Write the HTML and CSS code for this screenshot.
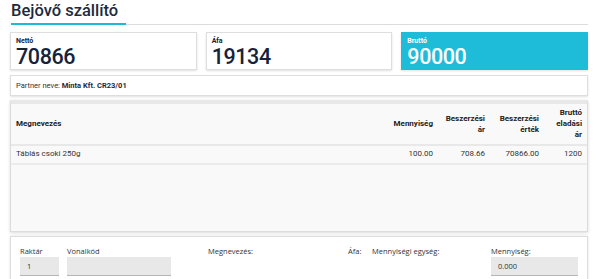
FILE: index.html
```html
<!DOCTYPE html>
<html lang="hu">
<head>
  <meta charset="UTF-8" />
  <title>Bejövő szállító</title>
  <link rel="stylesheet" href="styles.css">
</head>
<body>
  <div class="page">
    <h1 class="title">Bejövő szállító</h1>
    <div class="title-line"><span class="title-accent"></span></div>

    <div class="totals">
      <div class="card">
        <div class="card-label">Nettó</div>
        <div class="card-value">70866</div>
      </div>
      <div class="card">
        <div class="card-label">Áfa</div>
        <div class="card-value">19134</div>
      </div>
      <div class="card card-accent">
        <div class="card-label">Bruttó</div>
        <div class="card-value">90000</div>
      </div>
    </div>

    <div class="partner">Partner neve: <b>Minta Kft. CR23/01</b></div>

    <div class="items">
      <table class="item-table">
        <thead>
          <tr>
            <th>Megnevezés</th>
            <th class="num col-qty">Mennyiség</th>
            <th class="num col-price">Beszerzési ár</th>
            <th class="num col-value">Beszerzési érték</th>
            <th class="num col-gross">Bruttó eladási ár</th>
          </tr>
        </thead>
        <tbody>
          <tr>
            <td>Táblás csoki 250g</td>
            <td class="num">100.00</td>
            <td class="num">708.66</td>
            <td class="num">70866.00</td>
            <td class="num">1200</td>
          </tr>
        </tbody>
      </table>
    </div>

    <div class="entry">
      <div class="field">
        <label>Raktár</label>
        <div class="input">1</div>
      </div>
      <div class="field">
        <label>Vonalkód</label>
        <div class="input"></div>
      </div>
      <div class="field field-name">
        <label>Megnevezés:</label>
      </div>
      <div class="field">
        <label>Áfa:</label>
      </div>
      <div class="field">
        <label>Mennyiségi egység:</label>
      </div>
      <div class="field">
        <label>Mennyiség:</label>
        <div class="input">0.000</div>
      </div>
    </div>
  </div>
</body>
</html>
```

FILE: styles.css
```css
body { margin: 0; background: #fff; font-family: Roboto, "Liberation Sans", sans-serif; color: #222; }
.page { padding: 0 11px 0 10px; }

.title { margin: 0; padding: 0 0 0 1px; font-size: 16.5px; line-height: 21px; font-weight: 500; color: #1d2a3d; }
.title-line { margin: 3px 0 0 1px; height: 1px; border-top: 1px solid #dcdcdc; position: relative; }
.title-accent { position: absolute; left: 0; top: -2px; width: 115px; height: 2px; background: #1fb8d9; }

.totals { display: grid; grid-template-columns: 1fr 1fr 1fr; column-gap: 9px; margin-top: 6px; }
.card { background: #fff; border: 1px solid #dedede; box-shadow: 0 1px 2px rgba(0,0,0,.12); padding: 4px 5px 1px; height: 38px; box-sizing: border-box; color: #16223a; }
.card-label { font-size: 7px; line-height: 8px; font-weight: 700; }
.card-value { font-size: 21.5px; line-height: 24px; font-weight: 500; letter-spacing: -0.4px; }
.card-accent { background: #1ebcd9; border-color: #1ebcd9; color: #fff; }

.partner { margin-top: 5px; height: 21px; box-sizing: border-box; padding: 5px 5px 0; border: 1px solid #dedede; box-shadow: 0 1px 2px rgba(0,0,0,.12); font-size: 7.5px; line-height: 10px; color: #333; }
.partner b { color: #1d2a3d; }

.items { margin-top: 4px; height: 132px; box-sizing: border-box; background: #f9f9f9; border: 1px solid #dcdcdc; border-top: 4px solid #e8e8e8; box-shadow: 0 1px 3px rgba(0,0,0,.15); }
.item-table { width: 100%; border-collapse: collapse; table-layout: fixed; font-size: 8px; color: #333; }
.item-table th { box-sizing: border-box; padding: 3px 5px 4px; line-height: 11px; font-weight: 700; text-align: left; color: #222; border-bottom: 2px solid #e8e8e8; vertical-align: middle; }
.item-table td { padding: 3px 5px 4px; line-height: 10px; border-bottom: 2px solid #ececec; }
.item-table .num { text-align: right; }
.col-qty { width: 60px; }
.col-price { width: 52px; }
.col-value { width: 54px; }
.item-table .col-gross { width: 43px; padding-left: 12px; }

.entry { margin-top: 4px; height: 46px; box-sizing: border-box; padding: 9px 9px 0; border: 1px solid #dedede; box-shadow: 0 0 2px rgba(0,0,0,.12); display: grid; grid-template-columns: 39px 104px 161px 16px 111px 87px; column-gap: 8px; font-family: "Open Sans", "Liberation Sans", sans-serif; }
.field label { display: block; font-size: 7.5px; line-height: 10px; color: #333; white-space: nowrap; }
.field-name label { padding-left: 29px; }
.input { height: 19px; box-sizing: border-box; margin-top: 1px; padding: 0 7px; background: #e8e8e8; border-bottom: 1px solid #b5b5b5; font-size: 7.5px; line-height: 18px; color: #333; }
```
